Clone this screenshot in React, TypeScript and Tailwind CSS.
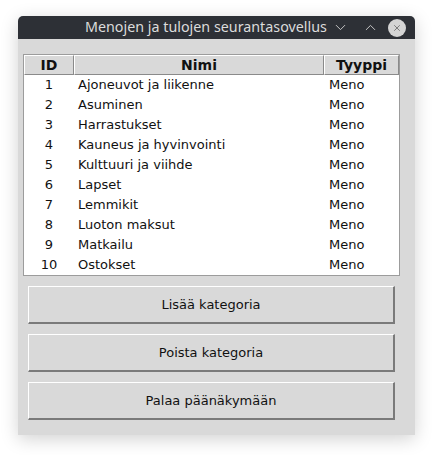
import { ChevronDown, ChevronUp, X } from 'lucide-react'

const ROWS = [
  'Ajoneuvot ja liikenne',
  'Asuminen',
  'Harrastukset',
  'Kauneus ja hyvinvointi',
  'Kulttuuri ja viihde',
  'Lapset',
  'Lemmikit',
  'Luoton maksut',
  'Matkailu',
  'Ostokset',
]

const BUTTONS = ['Lisää kategoria', 'Poista kategoria', 'Palaa päänäkymään']

export default function App() {
  return (
    <div className="w-[433px] h-[455px] bg-white pt-4 pl-[18px] font-['DejaVu_Sans',sans-serif]">
      <div className="w-[397px] h-[419px] flex flex-col rounded-t-[5px] overflow-hidden shadow-[0_4px_18px_rgba(0,0,0,0.18)]">
        {/* title bar */}
        <div className="h-[23px] shrink-0 bg-[#2d3036] flex items-center text-[#dcdcdc]">
          <span className="ml-[67px] whitespace-nowrap font-['Noto_Sans',sans-serif] text-[14.3px] leading-none">
            Menojen ja tulojen seurantasovellus
          </span>
          <ChevronDown size={17} strokeWidth={1.3} className="shrink-0 ml-[5px] text-[#d0d0d0]" />
          <ChevronUp size={17} strokeWidth={1.3} className="shrink-0 ml-[13px] text-[#d0d0d0]" />
          <div className="shrink-0 ml-[9px] w-[18px] h-[18px] rounded-full bg-[#d4d4d4] flex items-center justify-center">
            <X size={10} strokeWidth={1.4} className="text-[#3a3a3a]" />
          </div>
        </div>

        {/* body */}
        <div className="flex-1 bg-[#d9d9d9] px-[5px] pt-[15px]">
          <div className="w-[377px] border border-[#9c9c9c] bg-white text-[13px] text-[#111]">
            <div className="flex h-[20px] bg-[#d9d9d9] font-bold text-[14px] leading-none">
              <div className="w-[50px] border-t border-l border-t-white border-l-white border-r border-b border-r-[#8a8a8a] border-b-[#8a8a8a] flex items-center justify-center">ID</div>
              <div className="w-[250px] border-t border-l border-t-white border-l-white border-r border-b border-r-[#8a8a8a] border-b-[#8a8a8a] flex items-center justify-center">Nimi</div>
              <div className="flex-1 border-t border-l border-t-white border-l-white border-r border-b border-r-[#8a8a8a] border-b-[#8a8a8a] flex items-center justify-center">Tyyppi</div>
            </div>
            {ROWS.map((name, i) => (
              <div key={name} className="flex h-[20px] items-center">
                <div className="w-[50px] text-center">{i + 1}</div>
                <div className="w-[250px] pl-[4px]">{name}</div>
                <div className="flex-1 pl-[5px]">Meno</div>
              </div>
            ))}
          </div>

          <div className="flex flex-col gap-[10px] mt-[10px] px-[5px]">
            {BUTTONS.map(b => (
              <div
                key={b}
                className="h-[38px] w-[367px] flex items-center justify-center border border-t-white border-l-white border-r-[#7a7a7a] border-b-[#7a7a7a] border-r-2 border-b-2 text-[13px] text-[#111]"
              >
                {b}
              </div>
            ))}
          </div>
        </div>
      </div>
    </div>
  )
}
